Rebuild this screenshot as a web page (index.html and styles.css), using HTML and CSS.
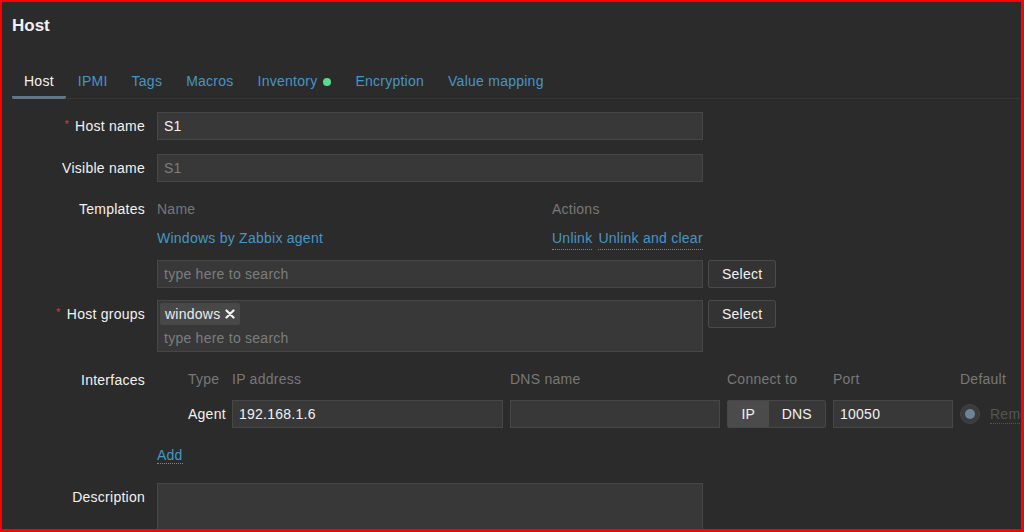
FILE: index.html
```html
<!DOCTYPE html>
<html>
	<head>
		<meta charset="utf-8">
		<title>Host</title>
		<link rel="stylesheet" href="styles.css">
	</head>
	<body>
		<div class="frame">
			<h1 class="title">Host</h1>
			<ul class="tabs">
				<li class="current">Host</li>
				<li>IPMI</li>
				<li>Tags</li>
				<li>Macros</li>
				<li>Inventory<span class="dot"></span></li>
				<li>Encryption</li>
				<li>Value mapping</li>
			</ul>

			<div class="form">
				<div class="row">
					<div class="label"><span class="req">*</span> Host name</div>
					<div class="field"><input class="text" type="text" value="S1"></div>
				</div>

				<div class="row">
					<div class="label">Visible name</div>
					<div class="field"><input class="text" type="text" placeholder="S1"></div>
				</div>

				<div class="row row-tpl">
					<div class="label">Templates</div>
					<div class="field">
						<div class="tpl-head">
							<span>Name</span>
							<span>Actions</span>
						</div>
						<div class="tpl-row">
							<span><a class="link">Windows by Zabbix agent</a></span>
							<span class="actions"><a class="link dotted">Unlink</a><a class="link dotted">Unlink and clear</a></span>
						</div>
						<div class="picker">
							<input class="text" type="text" placeholder="type here to search">
							<button class="btn">Select</button>
						</div>
					</div>
				</div>

				<div class="row row-groups">
					<div class="label"><span class="req">*</span> Host groups</div>
					<div class="field">
						<div class="picker">
							<div class="multi">
								<span class="chip">windows
									<svg class="x" width="10" height="10" viewBox="0 0 10 10"><path d="M1.5 1.5 L8.5 8.5 M8.5 1.5 L1.5 8.5" stroke="#f2f2f2" stroke-width="2.2" stroke-linecap="round"/></svg>
								</span>
								<div class="ph">type here to search</div>
							</div>
							<button class="btn">Select</button>
						</div>
					</div>
				</div>

				<div class="row row-if">
					<div class="label">Interfaces</div>
					<div class="field">
						<div class="ifaces">
							<div class="if-head">
								<span></span>
								<span>Type</span>
								<span>IP address</span>
								<span>DNS name</span>
								<span>Connect to</span>
								<span>Port</span>
								<span>Default</span>
							</div>
							<div class="if-row">
								<span></span>
								<span class="type">Agent</span>
								<input class="text" type="text" value="192.168.1.6">
								<input class="text" type="text" value="">
								<div class="toggle"><span class="on">IP</span><span>DNS</span></div>
								<input class="text" type="text" value="10050">
								<div class="def"><span class="radio"></span><a class="remove">Remove</a></div>
							</div>
						</div>
						<div class="add"><a class="link dotted">Add</a></div>
					</div>
				</div>

				<div class="row">
					<div class="label">Description</div>
					<div class="field"><textarea class="area"></textarea></div>
				</div>
			</div>
		</div>
	</body>
</html>
```

FILE: styles.css
```css
html, body{
	margin: 0;
	padding: 0;
	background: #2b2b2b;
}
.frame{
	width: 1024px;
	height: 532px;
	box-sizing: border-box;
	border-style: solid;
	border-color: #ff0000;
	border-width: 2px 3px 3px 2px;
	background: #2b2b2b;
	overflow: hidden;
	font-family: "Liberation Sans", Arial, sans-serif;
	font-size: 14px;
	letter-spacing: 0.25px;
	color: #f2f2f2;
}
.title{
	margin: 14px 0 0 0;
	padding-left: 10px;
	font-size: 17px;
	line-height: 20px;
	font-weight: bold;
	letter-spacing: 0;
	color: #f2f2f2;
}

/* tabs */
.tabs{
	list-style: none;
	margin: 29px 0 0 10px;
	padding: 0;
	display: flex;
	border-bottom: 1px solid #363636;
}
.tabs li{
	padding: 7px 12px 6px;
	line-height: 18px;
	color: #4796c4;
	border-bottom: 3px solid transparent;
	margin-bottom: -1px;
	display: flex;
	align-items: center;
}
.tabs .current{
	color: #f2f2f2;
	border-bottom-color: #627686;
	border-radius: 0 0 2px 2px;
}
.dot{
	width: 8px;
	height: 8px;
	border-radius: 50%;
	background: #59db8f;
	margin-left: 6px;
	margin-top: 1px;
}

/* form */
.form{
	padding-top: 13px;
}
.row{
	display: flex;
	margin-bottom: 14px;
}
.label{
	width: 143px;
	flex: none;
	margin-right: 12px;
	text-align: right;
	padding-top: 5px;
	line-height: 18px;
	color: #f2f2f2;
}
.req{
	color: #e33734;
	font-size: 11px;
	position: relative;
	top: -3px;
	margin-right: 2px;
}
.field{
	flex: 1;
	min-width: 0;
}
.text{
	display: block;
	width: 546px;
	height: 28px;
	box-sizing: border-box;
	margin: 0;
	padding: 0 6px;
	background: #383838;
	border: 1px solid #474747;
	color: #f2f2f2;
	font-family: "Liberation Sans", Arial, sans-serif;
	font-size: 14px;
	letter-spacing: 0.25px;
	outline: none;
}
.text::placeholder{
	color: #7d7d7d;
}
.link{
	color: #4796c4;
}
.dotted{
	border-bottom: 1px dotted #4796c4;
}

/* templates */
.row-tpl .label{
	padding-top: 4px;
}
.tpl-head, .tpl-row{
	display: grid;
	grid-template-columns: 395px auto;
	width: 546px;
}
.tpl-head{
	padding: 4px 0;
	line-height: 18px;
	color: #787878;
}
.tpl-row{
	margin-top: 4px;
	line-height: 24px;
	height: 24px;
}
.actions{
	display: flex;
	gap: 6px;
	line-height: 18px;
	padding-top: 3px;
}
.picker{
	display: flex;
	align-items: flex-start;
	gap: 5px;
	margin-top: 10px;
}
.row-tpl{
	margin-bottom: 12px;
}
.btn{
	height: 28px;
	padding: 0 13px;
	background: #333333;
	border: 1px solid #4a4a4a;
	border-radius: 2px;
	color: #f2f2f2;
	font-family: "Liberation Sans", Arial, sans-serif;
	font-size: 14px;
	letter-spacing: 0.25px;
}

/* host groups */
.row-groups .picker{
	margin-top: 0;
}
.multi{
	width: 546px;
	height: 52px;
	box-sizing: border-box;
	background: #383838;
	border: 1px solid #474747;
	padding: 2px;
}
.chip{
	display: inline-flex;
	align-items: center;
	height: 22px;
	padding: 0 5px;
	background: #484848;
	border-radius: 2px;
	color: #ebebeb;
	line-height: 22px;
}
.chip .x{
	margin-left: 5px;
}
.ph{
	padding: 3px 4px 0;
	line-height: 20px;
	color: #7d7d7d;
}

/* interfaces */
.row-if{
	margin-bottom: 19px;
}
.ifaces{
	width: 1000px;
}
.if-head, .if-row{
	display: grid;
	grid-template-columns: 24px 37px 271px 210px 99px 120px 120px;
	column-gap: 7px;
}
.if-head{
	padding: 4px 0;
	line-height: 18px;
	color: #787878;
}
.if-row{
	margin-top: 8px;
	align-items: center;
}
.if-row .text{
	width: 100%;
}
.type{
	line-height: 28px;
	white-space: nowrap;
}
.toggle{
	display: flex;
	height: 28px;
	box-sizing: border-box;
	border: 1px solid #474747;
	border-radius: 2px;
	background: #383838;
	overflow: hidden;
}
.toggle span{
	line-height: 26px;
	text-align: center;
	width: 57px;
}
.toggle .on{
	width: 41px;
	background: #4b4b4b;
}
.def{
	display: flex;
	align-items: center;
	gap: 10px;
}
.radio{
	width: 18px;
	height: 18px;
	border-radius: 50%;
	background: #3b3b3b;
	border: 1px solid #444444;
	display: flex;
	align-items: center;
	justify-content: center;
}
.radio::after{
	content: "";
	width: 10px;
	height: 10px;
	border-radius: 50%;
	background: #6c8497;
}
.remove{
	color: #555555;
	border-bottom: 1px dotted #555555;
	line-height: 18px;
}
.add{
	margin-top: 18px;
	line-height: 18px;
}

/* description */
.area{
	display: block;
	width: 546px;
	height: 80px;
	box-sizing: border-box;
	margin: 0;
	background: #383838;
	border: 1px solid #474747;
	resize: none;
}
```
